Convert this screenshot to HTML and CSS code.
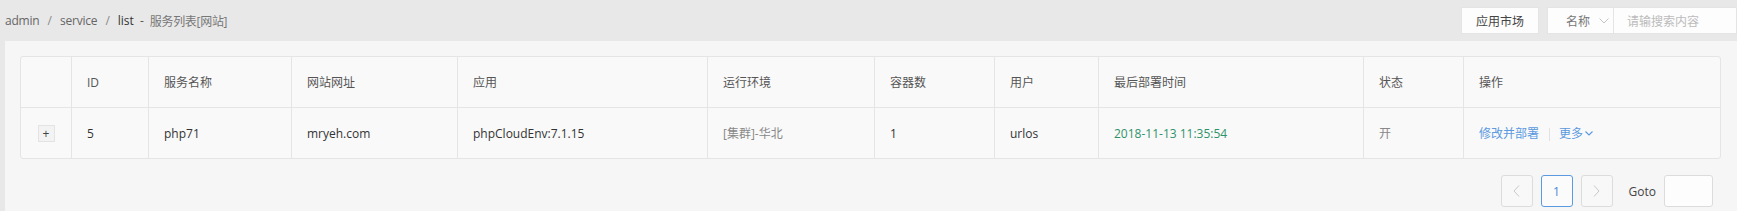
FILE: index.html
```html
<!DOCTYPE html>
<html lang="zh">
<head>
<meta charset="utf-8">
<title>服务列表</title>
<link rel="stylesheet" href="styles.css">
</head>
<body>
<div class="topbar">
  <div class="crumb">
    <span class="c-muted">admin</span><span class="c-sep">/</span><span class="c-muted">service</span><span class="c-sep">/</span><span class="c-cur">list</span><span class="c-dash">-</span><span class="c-title">服务列表[网站]</span>
  </div>
  <div class="tools">
    <button class="btn-market">应用市场</button>
    <div class="search">
      <div class="select">名称<svg class="sel-arrow" width="10" height="6" viewBox="0 0 10 6"><path d="M0.5 0.5 L5 5 L9.5 0.5" fill="none" stroke="#c4c4c4" stroke-width="1"/></svg></div>
      <div class="search-input">请输搜索内容</div>
    </div>
  </div>
</div>
<div class="panel">
  <div class="table-wrap">
    <table class="grid">
      <colgroup>
        <col class="w1"><col class="w2"><col class="w3"><col class="w4"><col class="w5"><col class="w6"><col class="w7"><col class="w8"><col class="w9"><col class="w10"><col class="w11">
      </colgroup>
      <thead>
        <tr>
          <th></th><th>ID</th><th>服务名称</th><th>网站网址</th><th>应用</th><th>运行环境</th><th>容器数</th><th>用户</th><th>最后部署时间</th><th>状态</th><th>操作</th>
        </tr>
      </thead>
      <tbody>
        <tr>
          <td class="exp-cell"><span class="expand">+</span></td>
          <td>5</td>
          <td>php71</td>
          <td>mryeh.com</td>
          <td>phpCloudEnv:7.1.15</td>
          <td class="muted">[集群]-华北</td>
          <td>1</td>
          <td>urlos</td>
          <td class="green">2018-11-13 11:35:54</td>
          <td class="muted">开</td>
          <td><span class="link">修改并部署</span><span class="divider"></span><span class="link">更多<svg class="more-arrow" width="8" height="5" viewBox="0 0 8 5"><path d="M0.5 0.5 L4 4 L7.5 0.5" fill="none" stroke="#5b9ae0" stroke-width="1.1"/></svg></span></td>
        </tr>
      </tbody>
    </table>
  </div>
  <div class="pager">
    <span class="pg pg-nav"><svg width="7" height="12" viewBox="0 0 7 12"><path d="M6 0.5 L1 6 L6 11.5" fill="none" stroke="#c8c8c8" stroke-width="1"/></svg></span>
    <span class="pg pg-active">1</span>
    <span class="pg pg-nav"><svg width="7" height="12" viewBox="0 0 7 12"><path d="M1 0.5 L6 6 L1 11.5" fill="none" stroke="#c8c8c8" stroke-width="1"/></svg></span>
    <span class="goto">Goto</span>
    <span class="goto-input"></span>
  </div>
</div>
</body>
</html>
```
FILE: styles.css
```css
html, body {
  margin: 0;
  padding: 0;
}
body {
  background: #e8e8e8;
  font-family: "Open Sans", "Noto Sans CJK SC", sans-serif;
  font-size: 12px;
  color: #333;
  overflow: hidden;
  width: 1737px;
  height: 211px;
}
.topbar {
  height: 41px;
  display: flex;
  align-items: center;
  justify-content: space-between;
  padding-left: 5px;
}
.crumb {
  font-size: 12px;
  color: #666;
  display: flex;
  align-items: center;
}
.c-muted { color: #666; letter-spacing: -0.2px; }
.c-sep { color: #888; margin: 0 8px; }
.c-cur { color: #333; }
.c-dash { color: #555; margin: 0 6px; }
.c-title { color: #777; letter-spacing: -0.3px; }
.tools {
  display: flex;
  align-items: center;
  gap: 8px;
}
.btn-market {
  height: 27px;
  width: 78px;
  border: 1px solid #e4e4e4;
  background: #fdfdfd;
  font-family: inherit;
  font-size: 12px;
  color: #444;
  padding: 0;
}
.search {
  display: flex;
  height: 27px;
  width: 190px;
  border: 1px solid #e4e4e4;
  background: #fdfdfd;
  box-sizing: border-box;
}
.select {
  width: 66px;
  box-sizing: border-box;
  border-right: 1px solid #e4e4e4;
  display: flex;
  align-items: center;
  padding-left: 18px;
  color: #777;
  gap: 9px;
}
.search-input {
  flex: 1;
  display: flex;
  align-items: center;
  padding-left: 13px;
  color: #bbb;
}
.panel {
  margin-left: 5px;
  background: #f6f6f6;
  padding: 15px 16px 0 15px;
  height: 170px;
  box-sizing: border-box;
}
.table-wrap {
  border: 1px solid #e5e5e5;
  border-radius: 3px;
  background: #f9f9f9;
  overflow: hidden;
}
.grid {
  width: 100%;
  table-layout: fixed;
  border-collapse: separate;
  border-spacing: 0;
}
.w1 { width: 50px; }
.w2 { width: 77px; }
.w3 { width: 143px; }
.w4 { width: 166px; }
.w5 { width: 250px; }
.w6 { width: 167px; }
.w7 { width: 120px; }
.w8 { width: 104px; }
.w9 { width: 265px; }
.w10 { width: 100px; }
.w11 { width: 257px; }
.grid th, .grid td {
  height: 50px;
  box-sizing: border-box;
  padding: 0 0 0 15px;
  text-align: left;
  font-weight: normal;
  border-left: 1px solid #e5e5e5;
  vertical-align: middle;
  white-space: nowrap;
}
.grid th:first-child, .grid td:first-child {
  border-left: none;
}
.grid th {
  color: #555;
  border-bottom: 1px solid #e5e5e5;
  height: 51px;
}
.grid td {
  color: #333;
}
.grid td.exp-cell {
  padding: 0;
  text-align: center;
}
.expand {
  display: inline-flex;
  width: 17px;
  height: 17px;
  box-sizing: border-box;
  border: 1px solid #e3e3e3;
  background: #f3f3f3;
  align-items: center;
  justify-content: center;
  color: #444;
  font-size: 12px;
  line-height: 1;
  vertical-align: middle;
}
.muted { color: #888 !important; }
.green { color: #2f936a !important; }
.link {
  color: #5b9ae0;
  display: inline-flex;
  align-items: center;
}
.more-arrow { margin-left: 2px; }
.divider {
  display: inline-block;
  width: 1px;
  height: 13px;
  background: #e2e2e2;
  margin: 0 9px 0 10px;
  vertical-align: middle;
}
.pager {
  display: flex;
  justify-content: flex-end;
  align-items: center;
  margin-top: 16px;
  padding-right: 8px;
}
.pg {
  width: 32px;
  height: 32px;
  box-sizing: border-box;
  border: 1px solid #dcdcdc;
  border-radius: 3px;
  background: #f8f8f8;
  display: flex;
  align-items: center;
  justify-content: center;
  margin-left: 8px;
}
.pg-active {
  border-color: #5b9ae0;
  color: #4a8ad6;
  background: #fbfbfb;
}
.goto {
  margin-left: 16px;
  color: #444;
}
.goto-input {
  width: 49px;
  height: 32px;
  box-sizing: border-box;
  border: 1px solid #dcdcdc;
  border-radius: 3px;
  background: #fdfdfd;
  margin-left: 8px;
}
```
